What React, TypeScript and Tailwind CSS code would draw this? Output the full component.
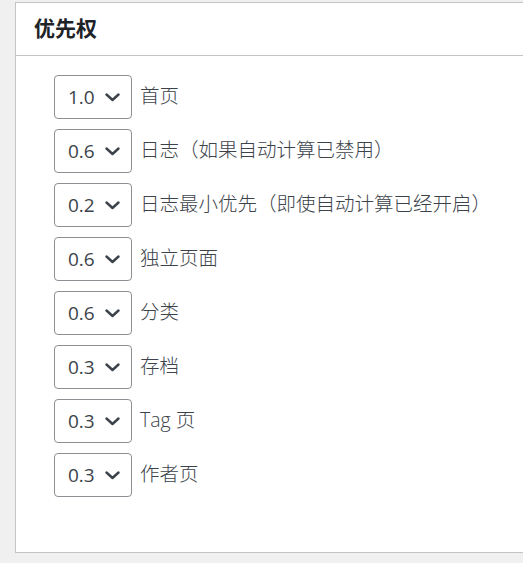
const rows = [
  { value: "1.0", label: "首页" },
  { value: "0.6", label: "日志（如果自动计算已禁用）" },
  { value: "0.2", label: "日志最小优先（即使自动计算已经开启）" },
  { value: "0.6", label: "独立页面" },
  { value: "0.6", label: "分类" },
  { value: "0.3", label: "存档" },
  { value: "0.3", label: "Tag 页" },
  { value: "0.3", label: "作者页" },
];

function Chevron() {
  return (
    <svg width="15" height="9" viewBox="0 0 15 9" fill="none">
      <path
        d="M1.5 1.5 L7.5 7 L13.5 1.5"
        stroke="#3c434a"
        strokeWidth="2.4"
        strokeLinecap="round"
        strokeLinejoin="round"
      />
    </svg>
  );
}

export default function App() {
  return (
    <div
      className="min-h-[563px] w-[523px] overflow-hidden bg-[#f0f0f1] pt-[2px] pl-[15px] text-[#3c434a]"
      style={{ fontFamily: '"Open Sans", "Noto Sans CJK SC", sans-serif' }}
    >
      <div className="h-[551px] w-[540px] border border-[#c3c4c7] bg-white">
        <div className="flex h-[53px] items-center border-b border-[#c3c4c7] pl-[18px] text-[21px] font-bold text-[#1d2327]">
          优先权
        </div>
        <div className="flex flex-col gap-[10px] pt-[19px] pl-[38px]">
          {rows.map((row, i) => (
            <div key={i} className="flex items-center gap-[8px]">
              <div className="flex h-[44px] w-[78px] items-center justify-between rounded-[4px] border-[1.5px] border-[#8c8f94] pr-[11px] pl-[13px]">
                <span className="text-[19px] leading-none">{row.value}</span>
                <Chevron />
              </div>
              <span className="-mt-[3px] text-[19.5px] font-light leading-none">{row.label}</span>
            </div>
          ))}
        </div>
      </div>
    </div>
  );
}
